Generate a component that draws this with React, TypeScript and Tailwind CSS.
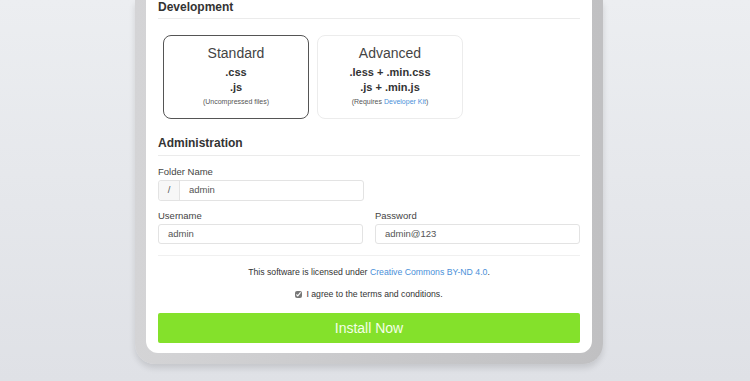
const font = { fontFamily: '"Liberation Sans", Arial, sans-serif' }

const Heading = (props: { children: React.ReactNode; className?: string }) => (
	<div
		className={`text-[12px] font-bold leading-[14px] text-[#333] pb-[4px] border-b border-[#ebebeb] ${props.className ?? ""}`}
	>
		{props.children}
	</div>
)

const BuildCard = (props: {
	title: string
	lines: string[]
	note: React.ReactNode
	active?: boolean
}) => (
	<div
		className={`w-[146px] h-[84px] rounded-[8px] border flex flex-col items-center pt-[8px] text-[#444] ${
			props.active ? "border-[#555]" : "border-[#ececec]"
		}`}
	>
		<div className="text-[14px] leading-[18px]">{props.title}</div>
		<div className="mt-[3px] flex flex-col items-center">
			{props.lines.map((line) => (
				<div key={line} className="text-[11px] font-bold leading-[15px] text-[#333]">
					{line}
				</div>
			))}
		</div>
		<div className="mt-[1px] text-[7px] leading-[12px] text-[#555]">{props.note}</div>
	</div>
)

const Field = (props: {
	label: string
	value: string
	addon?: string
	className?: string
	tall?: boolean
}) => (
	<div className={props.className}>
		<div className="text-[9.5px] leading-[12px] text-[#444]">{props.label}</div>
		<div
			className={`mt-[2px] flex border border-[#e3e3e3] rounded-[3px] text-[9.5px] text-[#555] bg-white ${
				props.tall ? "h-[21px]" : "h-[20px]"
			}`}
		>
			{props.addon && (
				<div className="w-[21px] flex items-center justify-center border-r border-[#e3e3e3] bg-[#f7f7f7] rounded-l-[3px]">
					{props.addon}
				</div>
			)}
			<div className="flex items-center px-[9px]">{props.value}</div>
		</div>
	</div>
)

export default function App() {
	return (
		<div
			style={font}
			className="w-[750px] h-[381px] overflow-hidden bg-gradient-to-b from-[#eceef1] to-[#dfe1e6]"
		>
			<div className="ml-[135px] w-[468px] px-[11px] pb-[11px] bg-gradient-to-r from-[#d4d4d6] via-[#c9c9cb] to-[#c0c0c2] rounded-b-[20px] shadow-[0_4px_6px_rgba(0,0,0,0.12)]">
				<div className="bg-white rounded-b-[12px] px-[12px] pb-[10px]">
					<Heading>Development</Heading>

					<div className="mt-[16px] ml-[5px] flex gap-[8px]">
						<BuildCard
							active
							title="Standard"
							lines={[".css", ".js"]}
							note="(Uncompressed files)"
						/>
						<BuildCard
							title="Advanced"
							lines={[".less + .min.css", ".js + .min.js"]}
							note={
								<>
									(Requires <span className="text-[#4a90d9]">Developer Kit</span>)
								</>
							}
						/>
					</div>

					<Heading className="mt-[17px] pb-[5px]">Administration</Heading>

					<Field
						tall
						className="mt-[10px] w-[206px]"
						label="Folder Name"
						value="admin"
						addon="/"
					/>

					<div className="mt-[9px] grid grid-cols-2 gap-[12px]">
						<Field label="Username" value="admin" />
						<Field label="Password" value="admin@123" />
					</div>

					<div className="mt-[11px] border-b border-[#f0f0f0]" />

					<div className="mt-[10px] text-center text-[8.7px] leading-[12px] text-[#333]">
						This software is licensed under{" "}
						<span className="text-[#4a90d9]">Creative Commons BY-ND 4.0</span>.
					</div>

					<div className="mt-[10px] flex items-center justify-center gap-[4px] text-[8.7px] leading-[12px] text-[#333]">
						<input
							type="checkbox"
							defaultChecked
							className="w-[7px] h-[7px] m-0 accent-[#777]"
						/>
						<span>I agree to the terms and conditions.</span>
					</div>

					<button
						type="button"
						className="mt-[13px] w-full h-[30px] rounded-[2px] bg-[#84e12b] text-[14px] text-[#f4ffe8]"
					>
						Install Now
					</button>
				</div>
			</div>
		</div>
	)
}
